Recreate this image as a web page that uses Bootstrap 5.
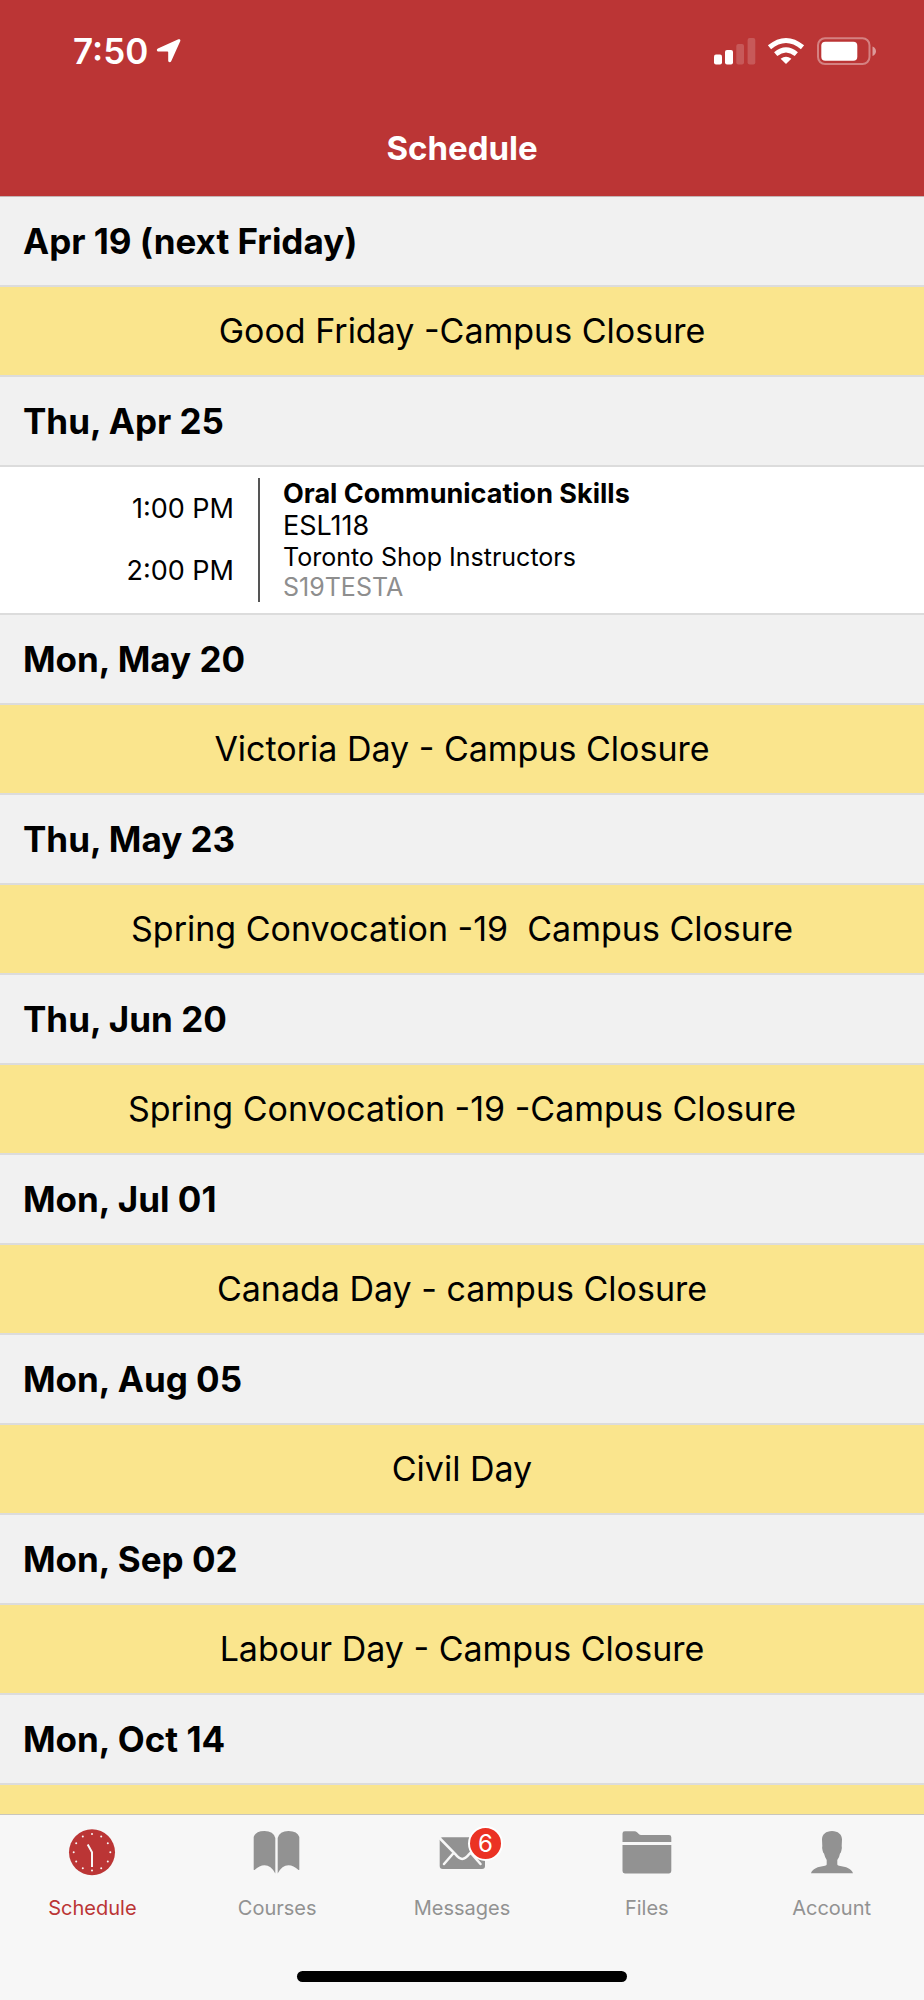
<!DOCTYPE html>
<html lang="en">
<head>
<meta charset="utf-8">
<meta name="viewport" content="width=device-width, initial-scale=1">
<title>Schedule</title>
<link href="https://cdn.jsdelivr.net/npm/bootstrap@5.3.0/dist/css/bootstrap.min.css" rel="stylesheet">
<style>
  body { font-family: Inter, "Liberation Sans", sans-serif; color: #000; background: #f7f7f7; }
  .app-header { background: #bb3535; border-bottom: 1px solid #c4b4b4; }
  .status-bar { height: 102px; padding: 0 47px 0 73px; }
  .clock-text { font-size: 35px; line-height: 40px; font-weight: 600; }
  .app-title { height: 94px; padding-bottom: 2px; font-size: 33px; line-height: 40px; font-weight: 700; }
  .day-head, .closure, .lesson { border-bottom: 2px solid #dcdcdc; }
  .day-head, .closure { min-height: 90px; line-height: 40px; }
  .day-head { background: #f1f1f1; padding: 0 23px; font-size: 35px; font-weight: 700; }
  .closure { background: #fae58d; font-size: 34px; white-space: pre-wrap; }
  .lesson { padding: 11px 0; }
  .times { flex: 0 0 260px; border-right: 2px solid #555; padding-right: 24px; font-size: 27px; line-height: 32px; }
  .details { padding-left: 23px; font-size: 25px; line-height: 30px; }
  .details .big-line { font-size: 27px; line-height: 32px; }
  .term { color: #8e8e8e; }
  .tab-bar { background: #f7f7f7; border-top: 1px solid #c8c6bd; }
  .tab-link { color: #929292; font-size: 20px; line-height: 30px; padding-top: 13px; gap: 17px; }
  .tab-link.active { color: #bb3535; }
  .count { top: -2px; left: 30px; width: 35px; height: 35px; background: #eb3223; color: #fff; border: 2px solid #fff; font-size: 24px; line-height: 31px; }
  .home-indicator { width: 330px; height: 11px; margin: 48px auto 18px; background: #000; }
</style>
</head>
<body>
<div class="vh-100 d-flex flex-column overflow-hidden">
  <header class="app-header text-white flex-shrink-0">
    <div class="status-bar d-flex align-items-center justify-content-between">
      <div class="d-flex align-items-center gap-2">
        <span class="clock-text">7:50</span>
        <svg width="25" height="24" viewBox="0 0 25 24" fill="#fff" aria-hidden="true"><path d="M22.400.3C23.800-.2 24.800.8 24.200 2.200L15.200 22.200C14.500 23.800 12.200 23.500 12.200 21.800V13.300Q12.200 12.600 11.500 12.600H2.500C.6 12.600.2 10.200 1.900 9.400Z"/></svg>
      </div>
      <svg width="163" height="28" viewBox="0 0 163 28" aria-hidden="true">
        <g fill="#fff">
          <rect x="0" y="17.500" width="8" height="10" rx="2"/>
          <rect x="11" y="13" width="8" height="14.500" rx="2"/>
          <rect x="22.300" y="7" width="7.700" height="20.500" rx="2" opacity=".18"/>
          <rect x="33.600" y="1" width="7.700" height="26.500" rx="2" opacity=".18"/>
          <path d="M72 27 66.600 21.700Q72 18 77.400 21.700Z"/>
        </g>
        <g fill="none" stroke="#fff" stroke-width="5">
          <path d="M55.500 10.300Q72-3.300 88.500 10.300"/>
          <path d="M61.700 17.200Q72 8.600 82.300 17.200"/>
        </g>
        <rect x="104" y="1.200" width="51.500" height="25.800" rx="7" fill="none" stroke="#fff" stroke-opacity=".38" stroke-width="2"/>
        <rect x="107.300" y="4.800" width="36" height="19" rx="4" fill="#fff"/>
        <path d="M158.500 9.500Q162 11 162 14.200T158.500 19Z" fill="#fff" opacity=".5"/>
      </svg>
    </div>
    <h1 class="app-title d-flex align-items-center justify-content-center m-0">Schedule</h1>
  </header>

  <main class="flex-fill overflow-hidden">
    <h2 class="day-head d-flex align-items-center m-0">Apr 19 (next Friday)</h2>
    <div class="closure d-flex align-items-center justify-content-center">Good Friday -Campus Closure</div>
    <h2 class="day-head d-flex align-items-center m-0">Thu, Apr 25</h2>
    <div class="lesson d-flex bg-white">
      <div class="times d-flex flex-column justify-content-around text-end">
        <time>1:00 PM</time>
        <time>2:00 PM</time>
      </div>
      <div class="details">
        <div class="big-line fw-bold">Oral Communication Skills</div>
        <div class="big-line">ESL118</div>
        <div>Toronto Shop Instructors</div>
        <div class="term">S19TESTA</div>
      </div>
    </div>
    <h2 class="day-head d-flex align-items-center m-0">Mon, May 20</h2>
    <div class="closure d-flex align-items-center justify-content-center">Victoria Day - Campus Closure</div>
    <h2 class="day-head d-flex align-items-center m-0">Thu, May 23</h2>
    <div class="closure d-flex align-items-center justify-content-center">Spring Convocation -19  Campus Closure</div>
    <h2 class="day-head d-flex align-items-center m-0">Thu, Jun 20</h2>
    <div class="closure d-flex align-items-center justify-content-center">Spring Convocation -19 -Campus Closure</div>
    <h2 class="day-head d-flex align-items-center m-0">Mon, Jul 01</h2>
    <div class="closure d-flex align-items-center justify-content-center">Canada Day - campus Closure</div>
    <h2 class="day-head d-flex align-items-center m-0">Mon, Aug 05</h2>
    <div class="closure d-flex align-items-center justify-content-center">Civil Day</div>
    <h2 class="day-head d-flex align-items-center m-0">Mon, Sep 02</h2>
    <div class="closure d-flex align-items-center justify-content-center">Labour Day - Campus Closure</div>
    <h2 class="day-head d-flex align-items-center m-0">Mon, Oct 14</h2>
    <div class="closure"></div>
  </main>

  <nav class="tab-bar flex-shrink-0" aria-label="Main">
    <div class="row g-0 row-cols-5">
      <a href="#" class="tab-link active col d-flex flex-column align-items-center text-decoration-none" aria-current="page">
        <svg width="48" height="48" viewBox="0 0 48 48" aria-hidden="true">
          <circle cx="24" cy="24.300" r="23" fill="currentColor"/>
          <path d="M19.700 16.600 24 24.300V39" fill="none" stroke="#f7f7f7" stroke-width="2"/>
          <g fill="#f7f7f7">
            <circle cx="24" cy="6" r="1"/><circle cx="33.200" cy="8.500" r="1"/><circle cx="39.800" cy="15.200" r="1"/>
            <circle cx="42.300" cy="24.300" r="1"/><circle cx="39.800" cy="33.400" r="1"/><circle cx="33.200" cy="40.200" r="1"/>
            <circle cx="24" cy="42.600" r="1"/><circle cx="14.800" cy="40.200" r="1"/><circle cx="8.200" cy="33.400" r="1"/>
            <circle cx="5.700" cy="24.300" r="1"/><circle cx="8.200" cy="15.200" r="1"/><circle cx="14.800" cy="8.500" r="1"/>
          </g>
        </svg>
        <span>Schedule</span>
      </a>
      <a href="#" class="tab-link col d-flex flex-column align-items-center text-decoration-none">
        <svg width="48" height="48" viewBox="0 0 48 48" fill="currentColor" aria-hidden="true">
          <path d="M.7 9Q2.500 3 11.500 3T22.300 10V45.500Q18 37.300 11.500 37.300 6.500 37.300 1.500 42 .7 42.300.7 41.500Z"/>
          <path d="M46.300 9Q44.500 3 35.500 3T24.700 10V45.500Q29 37.300 35.500 37.300 40.500 37.300 45.500 42 46.300 42.300 46.300 41.500Z"/>
        </svg>
        <span>Courses</span>
      </a>
      <a href="#" class="tab-link col d-flex flex-column align-items-center text-decoration-none">
        <span class="position-relative d-flex">
          <svg width="48" height="48" viewBox="0 0 48 48" aria-hidden="true">
            <rect x="1.700" y="9.300" width="45.300" height="31.700" rx="3" fill="currentColor"/>
            <path d="M2 10.500 17.500 26.300Q24.200 35.500 31 26.300L46.500 10.500M15.800 24.700 6 36M32.600 24.700 42.500 36" fill="none" stroke="#f7f7f7" stroke-width="2.500" stroke-linecap="round"/>
          </svg>
          <span class="count position-absolute rounded-circle text-center">6</span>
        </span>
        <span>Messages</span>
      </a>
      <a href="#" class="tab-link col d-flex flex-column align-items-center text-decoration-none">
        <svg width="50" height="48" viewBox="0 0 50 48" fill="currentColor" aria-hidden="true">
          <path d="M.5 14V5.500Q.5 3.200 2.800 3.200H12.500Q14 3.200 15 4.300L17 6.300Q17.800 7 19 7H47Q49.300 7 49.300 9.300V14Z"/>
          <path d="M.5 17H49.300V43Q49.300 45.400 47 45.400H2.800Q.5 45.400.5 43Z"/>
        </svg>
        <span>Files</span>
      </a>
      <a href="#" class="tab-link col d-flex flex-column align-items-center text-decoration-none">
        <svg width="48" height="48" viewBox="0 0 48 48" fill="currentColor" aria-hidden="true">
          <path d="M24 3C30 3 34 6.500 34 11.500L33.700 18Q34.300 20 33.300 23 32.800 25 32 25.500 31.500 29 29.300 32V36.500Q29.500 37.500 31 37.800C38 38.600 44 41 45 45.300H3C4 41 10 38.600 17 37.800Q18.500 37.500 18.700 36.500V32Q16.800 29 16 25.500 15.200 25 14.700 23 13.700 20 14.300 18L14 11.500C14 6.500 18 3 24 3Z"/>
        </svg>
        <span>Account</span>
      </a>
    </div>
    <div class="home-indicator rounded-pill"></div>
  </nav>
</div>
<script src="https://cdn.jsdelivr.net/npm/bootstrap@5.3.0/dist/js/bootstrap.bundle.min.js"></script>
</body>
</html>
